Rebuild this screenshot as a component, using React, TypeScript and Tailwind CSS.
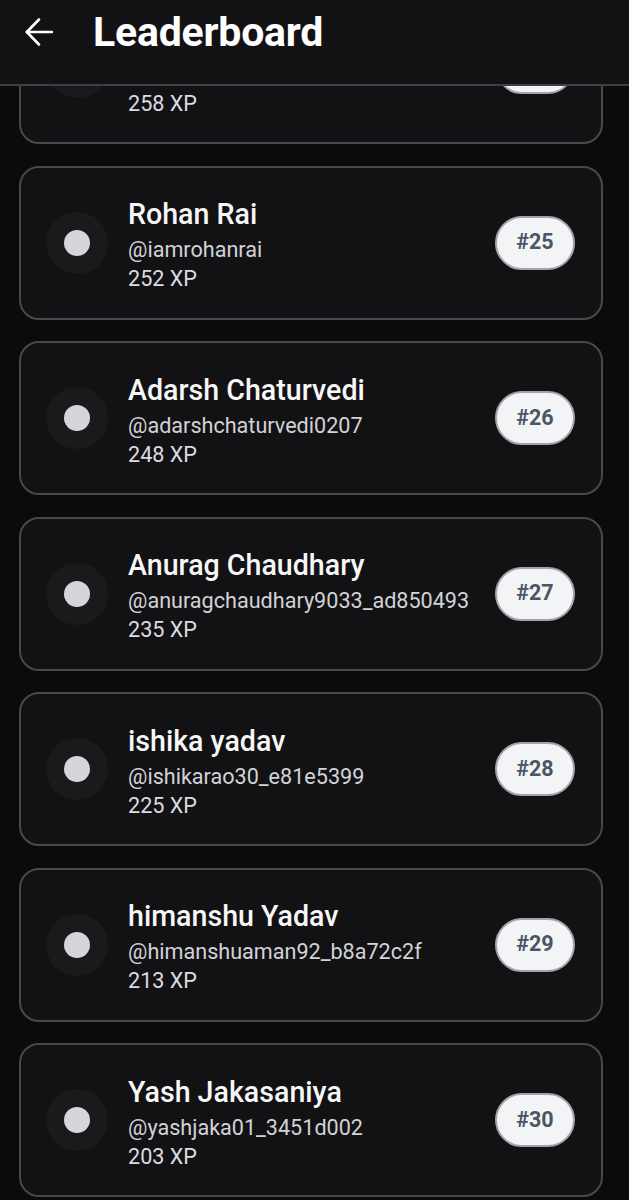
import React from "react";

type Entry = { name: string; handle: string; xp: number; rank: number };

const entries: Entry[] = [
  { name: "Aman Verma", handle: "@amanverma_24", xp: 258, rank: 24 },
  { name: "Rohan Rai", handle: "@iamrohanrai", xp: 252, rank: 25 },
  { name: "Adarsh Chaturvedi", handle: "@adarshchaturvedi0207", xp: 248, rank: 26 },
  { name: "Anurag Chaudhary", handle: "@anuragchaudhary9033_ad850493", xp: 235, rank: 27 },
  { name: "ishika yadav", handle: "@ishikarao30_e81e5399", xp: 225, rank: 28 },
  { name: "himanshu Yadav", handle: "@himanshuaman92_b8a72c2f", xp: 213, rank: 29 },
  { name: "Yash Jakasaniya", handle: "@yashjaka01_3451d002", xp: 203, rank: 30 },
];

function Card({ e, first }: { e: Entry; first?: boolean }) {
  return (
    <div
      className={
        "ml-[19px] w-[584px] h-[154px] shrink-0 rounded-[20px] border-2 border-[#48484d] bg-[#121214] flex items-center pl-[25px] pr-[26px]" +
        (first ? " -mt-[10px]" : "")
      }
    >
      <div className="w-[62px] h-[62px] rounded-full bg-[#1a1a1d] flex items-center justify-center shrink-0">
        <div className="w-[26px] h-[26px] rounded-full bg-[#d6d6da]" />
      </div>
      <div className="ml-[20px] flex-1 min-w-0 flex flex-col">
        <div className={"pt-[2px] text-[28.6px] leading-[41px] font-medium text-[#f7f7f8] whitespace-nowrap" + (first ? " invisible" : "")}>{e.name}</div>
        <div className={"text-[21.6px] leading-[29px] text-[#d2d2d7] whitespace-nowrap" + (first ? " invisible" : "")}>{e.handle}</div>
        <div className="text-[21.6px] leading-[29px] text-[#dcdce0] whitespace-nowrap">{e.xp} XP</div>
      </div>
      <div className="w-[80px] h-[54px] rounded-full border-2 border-[#a3a3a8] bg-[#f3f4f6] flex items-center justify-center shrink-0">
        <span className="text-[21.5px] font-bold text-[#4b5563]">#{e.rank}</span>
      </div>
    </div>
  );
}

export default function App() {
  return (
    <div
      className="relative w-[629px] h-[1200px] overflow-hidden bg-[#0b0b0c]"
      style={{ fontFamily: "Roboto, 'Noto Sans', sans-serif" }}
    >
      <div className="flex flex-col gap-[21.5px]">
        {entries.map((e, i) => (
          <Card key={e.rank} e={e} first={i === 0} />
        ))}
      </div>
      <header className="absolute top-0 left-0 right-0 h-[86px] bg-[#121214] border-b-2 border-[#3e3e43]">
        <div className="h-[64px] flex items-center pl-[25px]">
          <svg width="28" height="28" viewBox="0 0 28 28" fill="none" stroke="#ffffff" strokeWidth="2.6" strokeLinecap="round" strokeLinejoin="round">
            <path d="M27 14H2" />
            <path d="M14 1.5L1.8 14L14 26.5" />
          </svg>
          <h1 className="ml-[40px] text-[41px] leading-[40px] font-bold text-white tracking-[-0.2px]">Leaderboard</h1>
        </div>
      </header>
    </div>
  );
}
